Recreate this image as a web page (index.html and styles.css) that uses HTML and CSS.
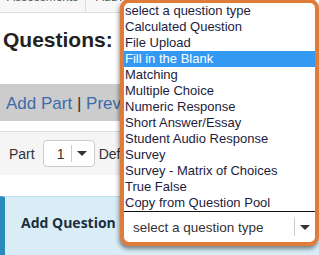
FILE: index.html
```html
<!DOCTYPE html>
<html>
<head>
<title>Questions - Assessments</title>
<link rel="stylesheet" href="styles.css">
</head>
<body>
<div class="tabs">
  <span class="tab tab-first">Assessments</span>
  <span class="tab">Add Assessment</span>
</div>

<h1 class="title">Questions: <span class="quiz-name">Quiz 1</span></h1>

<div class="actions">
  <a class="link">Add Part</a> <span class="pipe">|</span> <a class="link">Preview</a>
</div>

<div class="parts">
  <span class="label">Part</span>
  <span class="mini-select">
    <span class="mini-value">1</span>
    <span class="sep"></span>
    <span class="caret"></span>
  </span>
  <span class="label def">Default Points: 1</span>
</div>

<div class="add-box">
  <b class="add-title">Add Question</b>
</div>

<!-- callout over the question type dropdown -->
<div class="callout">
  <ul class="listbox">
    <li>select a question type</li>
    <li>Calculated Question</li>
    <li>File Upload</li>
    <li class="active">Fill in the Blank</li>
    <li>Matching</li>
    <li>Multiple Choice</li>
    <li>Numeric Response</li>
    <li>Short Answer/Essay</li>
    <li>Student Audio Response</li>
    <li>Survey</li>
    <li>Survey - Matrix of Choices</li>
    <li>True False</li>
    <li>Copy from Question Pool</li>
  </ul>
  <div class="select-box">
    <span class="select-text">select a question type</span>
    <span class="sep tall"></span>
    <span class="arrow-area"><span class="caret"></span></span>
  </div>
</div>
</body>
</html>
```

FILE: styles.css
```css
body {
	margin: 0;
	width: 319px;
	height: 255px;
	overflow: hidden;
	position: relative;
	background: #fff;
	font-family: "Liberation Sans", Arial, sans-serif;
}

.tabs {
	height: 12px;
	background: #f7f7f7;
	border-bottom: 1px solid #dddddd;
	display: flex;
	overflow: hidden;
}

.tab {
	font-size: 12px;
	line-height: 12px;
	margin-top: -9px;
	padding: 0 10px;
	color: #555;
	white-space: nowrap;
}

.tab-first {
	box-sizing: border-box;
	width: 86px;
	padding-left: 7px;
	border-right: 1px solid #dddddd;
}

.title {
	margin: 15px 0 0 3px;
	font-size: 21px;
	line-height: 24px;
	font-weight: bold;
	color: #222;
	white-space: nowrap;
}

.quiz-name {
	margin-left: 12px;
}

.actions {
	margin-top: 32px;
	height: 37px;
	line-height: 39px;
	padding-left: 6px;
	background: #cccccc;
	font-size: 17px;
	white-space: nowrap;
	overflow: hidden;
}

.link {
	color: #3f6aa9;
}

.pipe {
	color: #333;
}

.parts {
	margin-top: 10px;
	height: 43px;
	border-top: 1px solid #dddddd;
	background: #f5f5f5;
	display: flex;
	align-items: center;
	padding-left: 9px;
	font-size: 14px;
	color: #333;
	white-space: nowrap;
}

.mini-select {
	box-sizing: border-box;
	display: flex;
	align-items: center;
	width: 52px;
	height: 27px;
	margin-left: 8px;
	background: #fff;
	border: 1px solid #cccccc;
	border-radius: 4px;
}

.mini-value {
	width: 27px;
	padding-left: 13px;
	box-sizing: border-box;
}

.sep {
	width: 1px;
	height: 17px;
	background: #cccccc;
}

.mini-select .caret {
	margin-left: 5px;
}

.caret {
	width: 0;
	height: 0;
	border-left: 5px solid transparent;
	border-right: 5px solid transparent;
	border-top: 5px solid #333;
}

.def {
	margin-left: 4px;
}

.add-box {
	margin-top: 21px;
	height: 42px;
	background: #d9edf7;
	border-top: 1px solid #bfe0f0;
	border-left: 5px solid #2b8cbc;
	padding: 16px 0 0 16px;
}

.add-title {
	font-family: "Open Sans", "Liberation Sans", sans-serif;
	font-size: 14px;
	line-height: 20px;
	color: #1b2e3d;
}

.callout {
	position: absolute;
	left: 120px;
	top: -1px;
	width: 199px;
	box-sizing: border-box;
	border: 4px solid #e07c3a;
	border-radius: 9px;
	background: #fff;
	overflow: hidden;
	box-shadow: -1px 3px 4px rgba(0, 0, 0, 0.45);
}

.listbox {
	list-style: none;
	margin: 0;
	padding: 0;
	border-bottom: 1px solid #111;
	font-size: 13px;
	line-height: 16px;
	color: #1c1c3c;
}

.listbox li {
	padding-left: 1px;
	white-space: nowrap;
}

.listbox .active {
	background: #3399f3;
	color: #fff;
}

.select-box {
	display: flex;
	align-items: center;
	height: 30px;
	padding-left: 9px;
	font-size: 13.5px;
	color: #333;
}

.select-text {
	flex: 1;
	white-space: nowrap;
}

.sep.tall {
	height: 18px;
}

.arrow-area {
	width: 20px;
	display: flex;
	justify-content: center;
}
```
